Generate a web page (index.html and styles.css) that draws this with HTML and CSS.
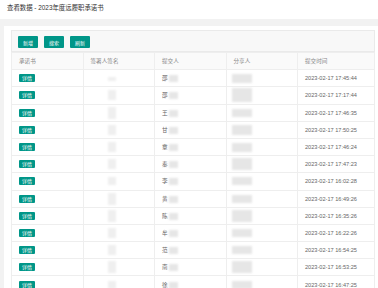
FILE: index.html
```html
<!DOCTYPE html>
<html lang="zh-CN">
<head>
  <meta charset="UTF-8">
  <title>查看数据</title>
  <link rel="stylesheet" href="styles.css">
</head>
<body>
  <div class="page-title">查看数据 - 2023年度远履职承诺书</div>
  <main class="main">
    <div class="card">
      <div class="toolbar">
        <button class="btn">新增</button>
        <button class="btn">搜索</button>
        <button class="btn">刷新</button>
      </div>
      <table class="data-table">
        <colgroup>
          <col class="c1"><col class="c2"><col class="c3"><col class="c4"><col class="c5">
        </colgroup>
        <thead>
          <tr><th>承诺书</th><th>签署人签名</th><th>提交人</th><th>分享人</th><th>提交时间</th></tr>
        </thead>
        <tbody id="rows"></tbody>
      </table>
    </div>
  </main>

  <script>
    // rows data: surname, signature blur height, share blur height, time
    const rows = [
      ['邵', 4, 9, '2023-02-17 17:45:44'],
      ['邵', 10, 14, '2023-02-17 17:17:44'],
      ['王', 12, 8, '2023-02-17 17:46:35'],
      ['甘', 10, 10, '2023-02-17 17:50:25'],
      ['章', 10, 9, '2023-02-17 17:46:24'],
      ['秦', 10, 12, '2023-02-17 17:47:23'],
      ['李', 8, 8, '2023-02-17 16:02:28'],
      ['黄', 12, 8, '2023-02-17 16:49:26'],
      ['陈', 12, 12, '2023-02-17 16:35:26'],
      ['牟', 10, 8, '2023-02-17 16:22:26'],
      ['范', 10, 8, '2023-02-17 16:54:25'],
      ['南', 12, 12, '2023-02-17 16:53:25'],
      ['徐', 8, 8, '2023-02-17 16:47:25']
    ];
    const tbody = document.getElementById('rows');
    rows.forEach(r => {
      const tr = document.createElement('tr');
      tr.innerHTML =
        '<td><span class="tag">详情</span></td>' +
        '<td class="sign"><span class="blur light" style="height:' + r[1] + 'px"></span></td>' +
        '<td>' + r[0] + '<span class="blur name"></span></td>' +
        '<td><span class="blur share" style="height:' + r[2] + 'px"></span></td>' +
        '<td>' + r[3] + '</td>';
      tbody.appendChild(tr);
    });
  </script>
</body>
</html>
```

FILE: styles.css
```css
/* Global */
body {
  margin: 0;
  background-color: #f2f2f2;
  font-family: "Liberation Sans", "Noto Sans CJK SC", sans-serif;
  color: #666;
  height: 288px;
  overflow: hidden;
}

/* Title bar */
.page-title {
  background-color: #fff;
  height: 19px;
  line-height: 16px;
  padding-left: 7px;
  font-size: 6.4px;
  color: #333;
}

/* Content */
.main {
  padding: 7px 0 0 4px;
}

.card {
  background-color: #fff;
  padding: 4px 3px 0 7px;
}

.toolbar {
  background-color: #f8f8f8;
  border: 1px solid #eaeaea;
  height: 22px;
  padding: 5px 0 0 6px;
  box-sizing: border-box;
  display: flex;
  gap: 6px;
}

.btn {
  background-color: #009688;
  color: #fff;
  border: none;
  border-radius: 1px;
  height: 12px;
  width: 20px;
  padding: 0;
  font-family: inherit;
  font-size: 5px;
}

/* Table */
.data-table {
  width: 100%;
  border-collapse: collapse;
  table-layout: fixed;
  font-size: 5.6px;
  border: 1px solid #ececec;
  border-top: none;
}

.c1, .c2, .c3, .c4 { width: 71.5px; }

.data-table th,
.data-table td {
  border: 1px solid #eeeeee;
  text-align: left;
  padding: 0 0 0 7px;
  height: 16.2px;
  font-weight: normal;
  white-space: nowrap;
}

.data-table th {
  background-color: #fafafa;
  color: #888;
}

.tag {
  display: inline-block;
  background-color: #009688;
  color: #fff;
  font-size: 5px;
  line-height: 8px;
  padding: 0 3px;
  border-radius: 1px;
  vertical-align: middle;
}

.blur {
  display: inline-block;
  vertical-align: middle;
  background-color: #e6e6e6;
  filter: blur(1.2px);
}

.sign .blur {
  margin-left: 17px;
  width: 8px;
}

.blur.light {
  background-color: #efefef;
}

.blur.name {
  width: 9px;
  height: 7px;
  margin-left: 1px;
}

.blur.share {
  margin-left: -2px;
  width: 20px;
}
```
